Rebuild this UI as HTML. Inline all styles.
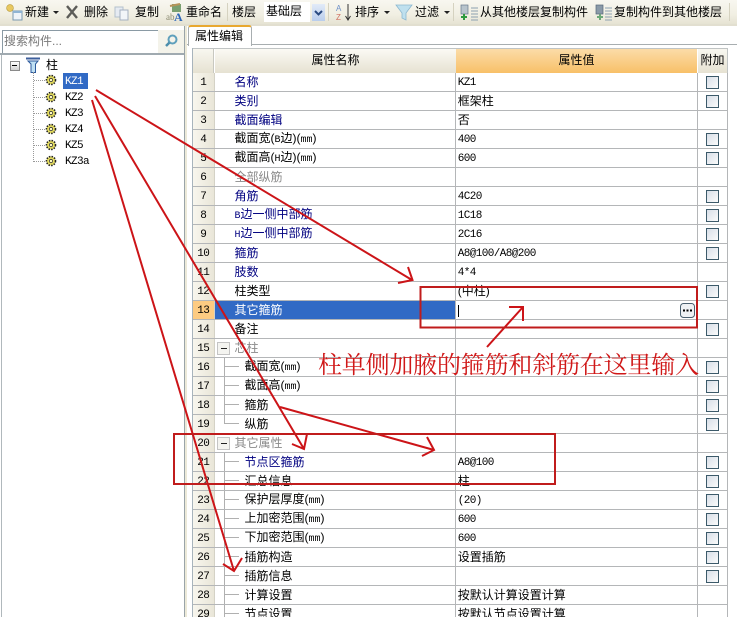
<!DOCTYPE html>
<html><head><meta charset="utf-8">
<style>
html,body{margin:0;padding:0;width:737px;height:617px;overflow:hidden}
body{background:#fff;font:12px/14px "Liberation Sans","WenQuanYi Zen Hei","Noto Sans CJK SC",sans-serif;color:#000}
#w{position:absolute;left:0;top:0;width:737px;height:617px;overflow:hidden;background:#fff}
.a{position:absolute;white-space:nowrap}
i{font:normal 11px/14px "Liberation Mono",monospace;letter-spacing:-.6px}
i.s{font-size:10px;letter-spacing:0}
#tb{left:0;top:0;width:737px;height:24px;background:linear-gradient(#f8f7f0,#f1efe3 60%,#e6e3d3)}
.sep{position:absolute;top:3px;width:1px;height:18px;background:#d5d2c0}
table{position:absolute;left:193px;top:73px;border-collapse:collapse;table-layout:fixed;width:535px}
td{height:18px;padding:0;border-bottom:1px solid #b4b6b8;border-right:1px solid #b4b6b8;white-space:nowrap;overflow:hidden;position:relative;line-height:14px}
td:first-child{background:linear-gradient(90deg,#f8f6ee,#e9e6d8);text-align:center;border-right-color:#d4d2c6}
td.n{padding-left:20px}
td.c{padding-left:30px}
td.v{padding-left:2px}
td.k{text-align:center}
.b{color:#000080}.g{color:#8a8a8a}
.cb{display:inline-block;width:11px;height:11px;border:1px solid #3c5a6a;background:linear-gradient(135deg,#d8dfe8,#fbfbfb);vertical-align:middle;margin-top:1px}
.dash{position:absolute;left:9px;top:8px;width:15px;height:1px;background:#b0b0b0}
.vl{position:absolute;left:9px;top:0;width:1px;height:19px;background:#b0b0b0}
.vh{position:absolute;left:9px;top:0;width:1px;height:9px;background:#b0b0b0}
.ex{position:absolute;left:2px;top:3px;width:11px;height:11px;border:1px solid #c4c4c4;background:#f4f4f0}
.ex:after{content:"";position:absolute;left:3px;top:5px;width:6px;height:1px;background:#222}
.kz{position:absolute;left:65px;font:11px/14px "Liberation Mono",monospace;letter-spacing:-.6px}
</style></head><body>
<div id="w">

<div class="a" id="tb"></div>
<div class="a" style="left:0;top:24px;width:737px;height:2px;background:#e2dfd0"></div>
<svg class="a" style="left:0;top:0" width="737" height="26" viewBox="0 0 737 26">
 <circle cx="10" cy="8" r="3.400" fill="#e8c860" stroke="#b89a3a" stroke-width=".6"/>
 <rect x="13" y="11" width="9" height="9" fill="#eef3f8" stroke="#7a98b0"/><rect x="13" y="11" width="9" height="2" fill="#8fb4d4"/>
 <path d="M67 6L77 18M77 6L67 18" stroke="#5c5c58" stroke-width="2.400" fill="none"/>
 <rect x="115" y="7" width="8" height="10" fill="#e6ebf2" stroke="#b4c0cc"/><rect x="120" y="10" width="8" height="10" fill="#f2f5f8" stroke="#a4b0c0"/>
 <rect x="172" y="4" width="9" height="8" fill="#7aa070"/><path d="M170 6L180 4" stroke="#b8945a" stroke-width="2"/>
 <text x="166" y="20" font-family="Liberation Serif" font-size="9" fill="#8a8a70">ab</text><text x="174" y="21" font-family="Liberation Serif" font-size="12" font-weight="bold" fill="#2c66b8">A</text>
 <text x="336" y="11" font-family="Liberation Sans" font-size="8" fill="#6d8fc8">A</text><text x="336" y="20" font-family="Liberation Sans" font-size="8" fill="#d07060">Z</text>
 <path d="M348 4V19M345.500 16L348 20L350.500 16" stroke="#333" stroke-width="1" fill="none"/>
 <path d="M396 5H412L406 13V20L402 18V13Z" fill="#bfe0ee" stroke="#8cb8d0" stroke-width=".8"/>
 <path d="M53 11h6l-3 3zM384 11h6l-3 3zM444 11h6l-3 3z" fill="#222"/>
 <rect x="461" y="5" width="7" height="9" fill="#b8c4cc" stroke="#66788a" stroke-width=".7"/><path d="M461 17h6M464 14v6" stroke="#2e9a40" stroke-width="2"/>
 <path d="M471 8h7M471 11h7M471 14h7M471 17h7M471 20h7" stroke="#8ca0b0"/>
 <rect x="596" y="5" width="7" height="9" fill="#8a9aa8" stroke="#56687a" stroke-width=".7"/><path d="M597 17h6M600 14v6" stroke="#6ca878" stroke-width="2"/>
 <path d="M605 8h7M605 11h7M605 14h7M605 17h7M605 20h7" stroke="#8ca0b0"/>
</svg>
<div class="a" style="left:25px;top:5px">新建</div>
<div class="a" style="left:84px;top:5px">删除</div>
<div class="a" style="left:135px;top:5px">复制</div>
<div class="a" style="left:186px;top:5px">重命名</div>
<div class="sep" style="left:227px"></div>
<div class="a" style="left:232px;top:5px">楼层</div>
<div class="a" style="left:264px;top:2px;width:46px;height:20px;background:#fff"></div>
<div class="a" style="left:266px;top:4px">基础层</div>
<div class="a" style="left:312px;top:4px;width:13px;height:17px;background:linear-gradient(#e2ebf8,#b9cdec)"></div>
<svg class="a" style="left:312px;top:4px" width="13" height="17"><path d="M3 7l3.500 3.500L10 7" stroke="#2a4a80" stroke-width="2" fill="none"/></svg>
<div class="sep" style="left:328px"></div>
<div class="a" style="left:355px;top:5px">排序</div>
<div class="a" style="left:415px;top:5px">过滤</div>
<div class="sep" style="left:453px"></div>
<div class="a" style="left:480px;top:5px">从其他楼层复制构件</div>
<div class="a" style="left:614px;top:5px">复制构件到其他楼层</div>
<div class="sep" style="left:729px"></div>

<!-- left panel -->
<div class="a" style="left:0;top:26px;width:184px;height:591px;background:#fff;border-right:1px solid #9aa4a8"></div>
<div class="a" style="left:1px;top:53px;width:1px;height:564px;background:#b0b8bc"></div>
<div class="a" style="left:185px;top:26px;width:2px;height:591px;background:#ece9d8"></div>
<div class="a" style="left:2px;top:30px;height:22px;border:1px solid #8a9aa4;border-bottom:0;background:#fff;color:#7a7a7a;line-height:20px;padding-left:1px;width:154px">搜索构件...</div>
<div class="a" style="left:0;top:53px;width:184px;height:2px;background:#a0aab0"></div>
<div class="a" style="left:158px;top:30px;width:26px;height:23px;background:#f4f3ea"></div>
<svg class="a" style="left:163px;top:33px" width="16" height="16"><circle cx="9.500" cy="6.500" r="4" fill="none" stroke="#5fa0bc" stroke-width="2"/><path d="M6.500 9.500L3 13" stroke="#4c8eac" stroke-width="2.500"/></svg>

<div class="a" style="left:10px;top:61px;width:8px;height:8px;border:1px solid #8a8a8a;background:linear-gradient(#fff,#d0d0d0)"></div>
<div class="a" style="left:12px;top:65px;width:5px;height:1px;background:#000"></div>
<svg class="a" style="left:25px;top:57px" width="16" height="17"><path d="M1 1.500H15" stroke="#3d5f9c" stroke-width="2"/><path d="M3 4H13L10.500 7V15.500H6V7Z" fill="#bfe0f4" stroke="#2c5a9c" stroke-width="1"/></svg>
<div class="a" style="left:46px;top:58px">柱</div>
<div class="a" style="left:33px;top:72px;height:90px;border-left:1px dotted #999"></div>
<div class="a" style="left:34px;top:80px;width:11px;border-top:1px dotted #999"></div>
<div class="a" style="left:34px;top:97px;width:11px;border-top:1px dotted #999"></div>
<div class="a" style="left:34px;top:113px;width:11px;border-top:1px dotted #999"></div>
<div class="a" style="left:34px;top:129px;width:11px;border-top:1px dotted #999"></div>
<div class="a" style="left:34px;top:145px;width:11px;border-top:1px dotted #999"></div>
<div class="a" style="left:34px;top:161px;width:11px;border-top:1px dotted #999"></div>
<div class="a" style="left:63px;top:73px;width:25px;height:16px;background:#316ac5"></div>
<svg class="a" style="left:45px;top:74px" width="13" height="94">
 <defs><g id="gr"><circle cx="6" cy="6" r="4.500" fill="#e8e060" stroke="#222" stroke-width="1.600" stroke-dasharray="1.500 1.200"/><circle cx="6" cy="6" r="1.700" fill="#fffbc0" stroke="#333" stroke-width=".8"/></g></defs>
 <use href="#gr" y="0"/><use href="#gr" y="17"/><use href="#gr" y="33"/><use href="#gr" y="49"/><use href="#gr" y="65"/><use href="#gr" y="81"/>
</svg>
<div class="kz" style="top:75px;color:#fff">KZ1</div>
<div class="kz" style="top:91px">KZ2</div>
<div class="kz" style="top:107px">KZ3</div>
<div class="kz" style="top:123px">KZ4</div>
<div class="kz" style="top:139px">KZ5</div>
<div class="kz" style="top:155px">KZ3a</div>

<!-- tab -->
<div class="a" style="left:187px;top:44px;width:550px;height:1px;background:#a8aeb0"></div>
<div class="a" style="left:188px;top:25px;background:#fff;border:1px solid #a8aeb0;border-bottom:0;border-top:2px solid #e8a830;border-radius:3px 3px 0 0;padding-left:6px;box-sizing:border-box;width:64px;height:21px;line-height:19px">属性编辑</div>
<div class="a" style="left:192px;top:48px;width:1px;height:569px;background:#a8b4bc"></div>
<div class="a" style="left:193px;top:48px;width:535px;height:1px;background:#c0c4c4"></div>
<div class="a" style="left:193px;top:49px;width:21px;height:24px;background:linear-gradient(#f8f7f0,#e6e2d2);box-shadow:inset -1px 0 #c8c8c0"></div>
<div class="a" style="left:215px;top:49px;width:241px;height:24px;background:linear-gradient(#fbfaf4,#e6e2d2);text-align:center;line-height:23px">属性名称</div>
<div class="a" style="left:456px;top:49px;width:241px;height:24px;background:linear-gradient(#fbdca8,#f8c068);text-align:center;line-height:23px">属性值</div>
<div class="a" style="left:698px;top:49px;width:29px;height:24px;background:linear-gradient(#f8f7f0,#e6e2d2);text-align:center;line-height:23px">附加</div>
<div class="a" style="left:727px;top:48px;width:1px;height:25px;background:#c0c4c4"></div>

<table>
<colgroup><col style="width:21px"><col style="width:241px"><col style="width:242px"><col style="width:30px"></colgroup>
<tr><td><i>1</i></td><td class="n b">名称</td><td class="v"><i>KZ1</i></td><td class="k"><span class="cb"></span></td></tr>
<tr><td><i>2</i></td><td class="n b">类别</td><td class="v">框架柱</td><td class="k"><span class="cb"></span></td></tr>
<tr><td><i>3</i></td><td class="n b">截面编辑</td><td class="v">否</td><td class="k"></td></tr>
<tr><td><i>4</i></td><td class="n">截面宽(<i class="s">B</i>边)(<i class="s">mm</i>)</td><td class="v"><i>400</i></td><td class="k"><span class="cb"></span></td></tr>
<tr><td><i>5</i></td><td class="n">截面高(<i class="s">H</i>边)(<i class="s">mm</i>)</td><td class="v"><i>600</i></td><td class="k"><span class="cb"></span></td></tr>
<tr><td><i>6</i></td><td class="n g">全部纵筋</td><td class="v"></td><td class="k"></td></tr>
<tr><td><i>7</i></td><td class="n b">角筋</td><td class="v"><i>4C20</i></td><td class="k"><span class="cb"></span></td></tr>
<tr><td><i>8</i></td><td class="n b"><i class="s">B</i>边一侧中部筋</td><td class="v"><i>1C18</i></td><td class="k"><span class="cb"></span></td></tr>
<tr><td><i>9</i></td><td class="n b"><i class="s">H</i>边一侧中部筋</td><td class="v"><i>2C16</i></td><td class="k"><span class="cb"></span></td></tr>
<tr><td><i>10</i></td><td class="n b">箍筋</td><td class="v"><i>A8@100/A8@200</i></td><td class="k"><span class="cb"></span></td></tr>
<tr><td><i>11</i></td><td class="n b">肢数</td><td class="v"><i>4*4</i></td><td class="k"></td></tr>
<tr><td><i>12</i></td><td class="n">柱类型</td><td class="v">(中柱)</td><td class="k"><span class="cb"></span></td></tr>
<tr><td style="background:#fdcb82"><i>13</i></td><td class="n" style="background:#316ac5;color:#fff">其它箍筋</td><td class="v"><span style="display:inline-block;width:1px;height:12px;background:#000;vertical-align:middle"></span></td><td class="k"></td></tr>
<tr><td><i>14</i></td><td class="n">备注</td><td class="v"></td><td class="k"><span class="cb"></span></td></tr>
<tr><td><i>15</i></td><td class="n g"><span class="ex"></span>芯柱</td><td class="v"></td><td class="k"></td></tr>
<tr><td><i>16</i></td><td class="c"><span class="vl"></span><span class="dash"></span>截面宽(<i class="s">mm</i>)</td><td class="v"></td><td class="k"><span class="cb"></span></td></tr>
<tr><td><i>17</i></td><td class="c"><span class="vl"></span><span class="dash"></span>截面高(<i class="s">mm</i>)</td><td class="v"></td><td class="k"><span class="cb"></span></td></tr>
<tr><td><i>18</i></td><td class="c"><span class="vl"></span><span class="dash"></span>箍筋</td><td class="v"></td><td class="k"><span class="cb"></span></td></tr>
<tr><td><i>19</i></td><td class="c"><span class="vh"></span><span class="dash"></span>纵筋</td><td class="v"></td><td class="k"><span class="cb"></span></td></tr>
<tr><td><i>20</i></td><td class="n g"><span class="ex"></span>其它属性</td><td class="v"></td><td class="k"></td></tr>
<tr><td><i>21</i></td><td class="c b"><span class="vl"></span><span class="dash"></span>节点区箍筋</td><td class="v"><i>A8@100</i></td><td class="k"><span class="cb"></span></td></tr>
<tr><td><i>22</i></td><td class="c"><span class="vl"></span><span class="dash"></span>汇总信息</td><td class="v">柱</td><td class="k"><span class="cb"></span></td></tr>
<tr><td><i>23</i></td><td class="c"><span class="vl"></span><span class="dash"></span>保护层厚度(<i class="s">mm</i>)</td><td class="v"><i>(20)</i></td><td class="k"><span class="cb"></span></td></tr>
<tr><td><i>24</i></td><td class="c"><span class="vl"></span><span class="dash"></span>上加密范围(<i class="s">mm</i>)</td><td class="v"><i>600</i></td><td class="k"><span class="cb"></span></td></tr>
<tr><td><i>25</i></td><td class="c"><span class="vl"></span><span class="dash"></span>下加密范围(<i class="s">mm</i>)</td><td class="v"><i>600</i></td><td class="k"><span class="cb"></span></td></tr>
<tr><td><i>26</i></td><td class="c"><span class="vl"></span><span class="dash"></span>插筋构造</td><td class="v">设置插筋</td><td class="k"><span class="cb"></span></td></tr>
<tr><td><i>27</i></td><td class="c"><span class="vl"></span><span class="dash"></span>插筋信息</td><td class="v"></td><td class="k"><span class="cb"></span></td></tr>
<tr><td><i>28</i></td><td class="c"><span class="vl"></span><span class="dash"></span>计算设置</td><td class="v">按默认计算设置计算</td><td class="k"></td></tr>
<tr><td><i>29</i></td><td class="c"><span class="vl"></span><span class="dash"></span>节点设置</td><td class="v">按默认节点设置计算</td><td class="k"></td></tr>
</table>

<svg class="a" style="left:680px;top:303px" width="15" height="15"><rect x=".5" y=".5" width="14" height="14" rx="3" fill="#eef1f4" stroke="#4a6070"/><path d="M3 7.500h2M6.500 7.500h2M10 7.500h2" stroke="#000" stroke-width="2"/></svg>

<svg class="a" style="left:0;top:0" width="737" height="617" viewBox="0 0 737 617" fill="none" stroke="#cc1418" stroke-width="2">
 <path d="M96 90L412 280M398 283L412.500 280L408 267"/>
 <path d="M95 96L304 449M292 444L304 449L307 434"/>
 <path d="M92 100L234 571M223 564L234 571L242 558"/>
 <path d="M280 407L434 450M422 456L434 450L427 437"/>
 <path d="M487 347L523 307M509 307H523V321"/>
 <rect x="420.500" y="287" width="276.500" height="40.500" stroke="#c01c1c" stroke-width="2"/>
 <rect x="174" y="434" width="381" height="50" stroke="#c01c1c" stroke-width="2"/>
</svg>
<div class="a" style="left:318px;top:349px;font:24px/28px 'Noto Serif CJK SC',serif;color:#d01818;letter-spacing:-.2px">柱单侧加腋的箍筋和斜筋在这里输入</div>
</div>
</body></html>
